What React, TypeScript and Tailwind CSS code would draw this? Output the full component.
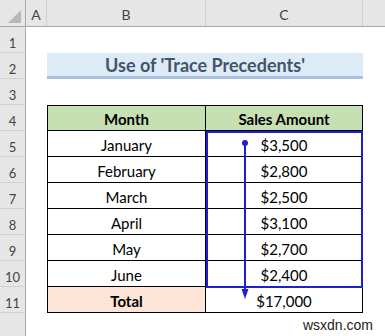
const months = [
  { row: 5, month: 'January', amount: '$3,500' },
  { row: 6, month: 'February', amount: '$2,800' },
  { row: 7, month: 'March', amount: '$2,500' },
  { row: 8, month: 'April', amount: '$3,100' },
  { row: 9, month: 'May', amount: '$2,700' },
  { row: 10, month: 'June', amount: '$2,400' },
];

const RowNum = ({ n }: { n: number | string }) => (
  <div className="w-[26px] h-[26px] shrink-0 flex items-center justify-center pt-[8px] bg-[#e6e6e6] border-r border-r-[#a8a8a8] border-b border-b-[#cfcfcf] text-[13px] text-[#444]">
    {n}
  </div>
);

const Spacer = () => <div className="w-[21px] shrink-0" />;

const App = () => {
  return (
    <div className="relative w-[385px] h-[336px] overflow-hidden bg-white font-['Lato','Liberation_Sans',sans-serif] text-black">
      {/* Column headers */}
      <div className="flex h-[27px] bg-[#e6e6e6] border-b border-[#a8a8a8] text-[14px] text-[#444]">
        <div className="w-[26px] shrink-0 relative border-r border-[#a8a8a8]">
          <svg className="absolute right-[4px] bottom-[3px]" width="13" height="13" viewBox="0 0 13 13">
            <polygon points="13,0 13,13 0,13" fill="#b7b7b7" />
          </svg>
        </div>
        <div className="w-[21px] shrink-0 flex items-center justify-center pt-[2px] border-r border-[#cfcfcf]">A</div>
        <div className="w-[159px] shrink-0 flex items-center justify-center pt-[2px] border-r border-[#cfcfcf]">B</div>
        <div className="w-[157px] shrink-0 flex items-center justify-center pt-[2px] border-r border-[#cfcfcf]">C</div>
        <div className="flex-1" />
      </div>

      {/* Row 1 */}
      <div className="flex">
        <RowNum n={1} />
      </div>

      {/* Row 2: title */}
      <div className="flex">
        <RowNum n={2} />
        <Spacer />
        <div className="w-[316px] h-[26px] shrink-0 flex items-center justify-center bg-[#ddebf7] border-b-[3px] border-[#a9c2e4] text-[18px] font-bold text-[#44546a] pt-[2px]">
          Use of 'Trace Precedents'
        </div>
      </div>

      {/* Row 3 */}
      <div className="flex">
        <RowNum n={3} />
      </div>

      {/* Row 4: header */}
      <div className="flex">
        <RowNum n={4} />
        <Spacer />
        <div className="w-[159px] h-[26px] shrink-0 flex items-center justify-center pt-[3px] bg-[#c6e0b4] border border-black text-[15px] font-bold">
          Month
        </div>
        <div className="w-[157px] h-[26px] shrink-0 flex items-center justify-center pt-[3px] bg-[#c6e0b4] border-y border-r border-black text-[15px] font-bold">
          Sales Amount
        </div>
      </div>

      {months.map((m) => (
        <div key={m.row} className="flex">
          <RowNum n={m.row} />
          <Spacer />
          <div className="w-[159px] h-[26px] shrink-0 flex items-center justify-center pt-[4px] border-x border-b border-black text-[15px]">
            {m.month}
          </div>
          <div className="w-[157px] h-[26px] shrink-0 flex items-center justify-center pt-[4px] border-r border-b border-black text-[15px]">
            {m.amount}
          </div>
        </div>
      ))}

      {/* Row 11: total */}
      <div className="flex">
        <RowNum n={11} />
        <Spacer />
        <div className="w-[159px] h-[26px] shrink-0 flex items-center justify-center pt-[4px] bg-[#fce4d6] border-x border-b border-black text-[15px] font-bold">
          Total
        </div>
        <div className="w-[157px] h-[26px] shrink-0 flex items-center justify-center pt-[4px] border-r border-b border-black text-[15px]">
          $17,000
        </div>
      </div>

      {/* Row 12 */}
      <div className="flex items-end">
        <RowNum n="" />
        <div className="flex-1 text-right pr-[12px] pb-[3px] text-[14px] text-[#222] font-['Liberation_Sans',sans-serif]">
          wsxdn.com
        </div>
      </div>

      {/* Trace precedents box */}
      <div className="absolute left-[206px] top-[131px] w-[157px] h-[157px] border-2 border-[#1f1fd2]" />

      {/* Trace arrow */}
      <svg className="absolute left-[238px] top-[138px]" width="14" height="162" viewBox="0 0 14 162">
        <circle cx="7" cy="5" r="3" fill="#1f1fd2" />
        <line x1="7" y1="5" x2="7" y2="152" stroke="#1f1fd2" strokeWidth="2" />
        <polygon points="3.5,151 10.5,151 7,161" fill="#1f1fd2" />
      </svg>
    </div>
  );
};

export default App;
